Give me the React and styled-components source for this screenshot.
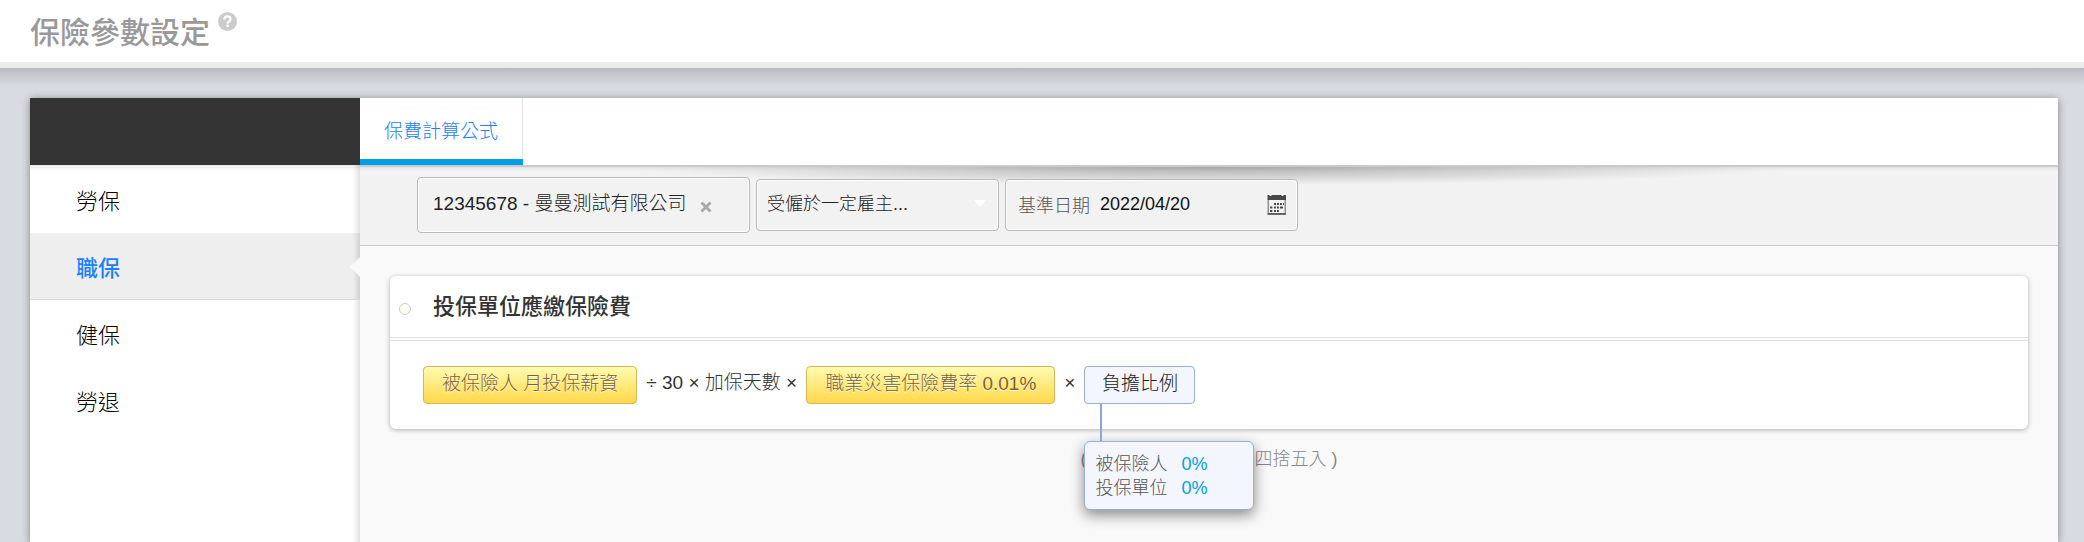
import React from "react";
import styled, { createGlobalStyle, css } from "styled-components";

const Global = createGlobalStyle`
  * { box-sizing: border-box; }
  html, body, #root { min-height: 100vh; }
  body {
    margin: 0;
    font-family: "Liberation Sans", "Noto Sans CJK TC", sans-serif;
    font-size: 19px;
    font-weight: 300;
    color: #333;
    background: #d8dbe1;
  }
  button, input, select { font: inherit; color: inherit; }
  #root { display: flex; flex-direction: column; }
`;

const Header = styled.header`
  display: flex;
  align-items: flex-start;
  height: 68px;
  padding: 12px 30px 0;
  background: #fff;
  border-bottom: 6px solid #ebebeb;
`;

const PageTitle = styled.h1`
  margin: 0;
  font-size: 30px;
  line-height: 42px;
  font-weight: 500;
  color: #999;
`;

const HelpButton = styled.button`
  display: flex;
  margin: 0 0 0 8px;
  padding: 0;
  border: 0;
  background: none;
`;

const Main = styled.main`
  flex: 1;
  display: flex;
  padding: 30px 26px 0 30px;
  background:
    linear-gradient(#b9bbc1, rgba(216, 219, 225, 0) 18px),
    #d8dbe1;
`;

const Panel = styled.div`
  flex: 1;
  display: flex;
  min-width: 0;
  background: #f9f9f9;
  box-shadow: 0 1px 8px rgba(0, 0, 0, 0.4);
`;

const Sidebar = styled.aside`
  flex: 0 0 330px;
  background: #fff;
`;

const SidebarHead = styled.div`
  height: 67px;
  background: #333;
`;

const NavList = styled.nav`
  display: flex;
  flex-direction: column;
  min-height: calc(100% - 67px);
  padding-top: 1px;
  background:
    linear-gradient(rgba(0, 0, 0, 0.09), rgba(0, 0, 0, 0) 6px),
    linear-gradient(to left, rgba(0, 0, 0, 0.12), rgba(0, 0, 0, 0) 7px);
`;

const NavItem = styled.a`
  position: relative;
  height: 67px;
  padding-left: 46px;
  font-size: 22px;
  line-height: 72px;
  color: #000;
  text-decoration: none;
  ${(p) => p.$active && css`
    color: #1a80ff;
    font-weight: 500;
    border-bottom: 1px solid #d8d8d8;
    background: linear-gradient(to left, rgba(0, 0, 0, 0.12), rgba(0, 0, 0, 0) 7px), #eee;
    &::after {
      content: "";
      position: absolute;
      right: 0;
      top: 24px;
      border: 10px solid transparent;
      border-left-width: 0;
      border-right-color: #f9f9f9;
    }
  `}
`;

const Content = styled.section`
  flex: 1;
  min-width: 0;
`;

const Tabs = styled.div`
  display: flex;
  height: 67px;
  background: #fff;
`;

const Tab = styled.button`
  padding: 2px 24px 0;
  border: 0;
  border-right: 1px solid #e4e4e4;
  border-bottom: 6px solid #009fe8;
  border-image: linear-gradient(#e4e4e4 61px, #009fe8 61px) 0 1 6 0;
  background: #fff;
  color: #1a80ff;
  font-weight: 300;
`;

const Filters = styled.form`
  display: flex;
  align-items: center;
  gap: 6px;
  height: 81px;
  padding: 0 57px 2px;
  border-top: 2px solid #c9caca;
  border-bottom: 1px solid #c9cbcb;
  background:
    radial-gradient(ellipse 34% 18px at 50% 0, rgba(0, 0, 0, 0.28), rgba(0, 0, 0, 0)),
    linear-gradient(rgba(0, 0, 0, 0.06), rgba(0, 0, 0, 0) 4px),
    #f2f2f2;
`;

const Field = styled.div`
  display: flex;
  align-items: center;
  width: ${(p) => p.$width}px;
  height: ${(p) => (p.$tall ? 56 : 52)}px;
  padding: 0 ${(p) => (p.$tall ? 15 : 10)}px 2px;
  border: 1px solid #b9b9b9;
  border-radius: 4px;
  background: #f2f2f2;
  box-shadow: inset 0 0 0 1px #fff;
  white-space: nowrap;
  color: #222;
`;

const Company = styled.span`
  padding-bottom: 6px;
`;

const ClearButton = styled.button`
  display: flex;
  margin: 6px 0 0 14px;
  padding: 0;
  border: 0;
  background: none;
`;

const Select = styled.select`
  flex: 1;
  min-width: 0;
  padding: 0;
  border: 0;
  appearance: none;
  background: none;
  font-size: 18px;
`;

const FieldLabel = styled.label`
  margin: 0 10px 0 2px;
  font-size: 18px;
  color: #555;
`;

const DateInput = styled.input`
  flex: 1;
  min-width: 0;
  padding: 0;
  border: 0;
  background: none;
  font-size: 18px;
  color: #111;
`;

const IconButton = styled.button`
  display: flex;
  padding: 0;
  border: 0;
  background: none;
`;

const Body = styled.div`
  padding: 30px;
`;

const Card = styled.article`
  border-radius: 6px;
  background: #fff;
  box-shadow: 0 1px 5px rgba(0, 0, 0, 0.3);
`;

const CardHead = styled.header`
  display: flex;
  align-items: center;
  height: 65px;
  padding: 0 9px;
  border-bottom: 4px double #e0e0e0;
`;

const Dot = styled.span`
  width: 12px;
  height: 12px;
  margin: 5px 22px 0 0;
  border: 1px solid #ccc;
  border-radius: 50%;
  background: #fffef5;
`;

const CardTitle = styled.h2`
  margin: 0;
  font-size: 22px;
  line-height: 32px;
  font-weight: 500;
`;

const Formula = styled.div`
  display: flex;
  align-items: center;
  height: 88px;
  padding: 0 33px;
  line-height: 28px;
`;

const Operator = styled.span`
  padding: 0 9px 4px;
  white-space: pre;
`;

const Chip = styled.button`
  height: 38px;
  padding: 0 18px 2px;
  border: 1px solid #d8b45c;
  border-radius: 4px;
  background: linear-gradient(#fffbb0, #ffd84a);
  color: #85601c;
  text-shadow: 0 1px 0 #fff;
  white-space: nowrap;
`;

const RatioWrap = styled.div`
  position: relative;
`;

const RatioButton = styled.button`
  display: block;
  width: 111px;
  height: 38px;
  padding: 0 0 2px;
  border: 1px solid #98afdc;
  border-radius: 4px;
  background: #f3f6fc;
  color: #222;
`;

const Popover = styled.dl`
  position: absolute;
  top: 75px;
  left: 0;
  z-index: 2;
  display: grid;
  grid-template-columns: 72px 1fr;
  column-gap: 14px;
  width: 170px;
  height: 69px;
  margin: 0;
  padding: 10px;
  border: 1px solid #98afdc;
  border-radius: 6px;
  background: #f3f6fc;
  box-shadow: 0 5px 14px rgba(0, 0, 0, 0.45);
  font-size: 18px;
  line-height: 24px;
  color: #555;
  &::before {
    content: "";
    position: absolute;
    left: 15px;
    top: -38px;
    width: 2px;
    height: 37px;
    background: #8fa6da;
  }
  dd { margin: 0; color: #00a0e9; }
`;

const Note = styled.p`
  display: flex;
  justify-content: center;
  gap: 168px;
  margin: 16px 0 0;
  font-size: 18px;
  line-height: 28px;
  color: #888;
`;

const navItems = ["勞保", "職保", "健保", "勞退"];

function HelpIcon() {
  return (
    <svg width="19" height="19" viewBox="0 0 19 19" aria-hidden="true">
      <circle cx="9.5" cy="9.5" r="9.5" fill="#ccc" />
      <path d="M6.4 7.4c0-2 1.3-3 3.1-3s3.100 1 3.100 2.700c0 2.200-2.900 2.200-2.900 4.300" fill="none" stroke="#fff" strokeWidth="2.2" />
      <rect x="8.5" y="12.6" width="2.4" height="2.3" fill="#fff" />
    </svg>
  );
}

function CalendarIcon() {
  return (
    <svg width="20" height="21" viewBox="0 0 20 21" aria-hidden="true">
      <path d="M0.500 1h2v1h2V1h10v1h2V1h2.500v5H0.500z" fill="#484848" />
      <path d="M1.200 6v13.800h17V6" fill="none" stroke="#777" strokeWidth="1.200" />
      <path d="M0.600 19.300h18.200v1.400H0.600z" fill="#484848" />
      <path d="M7 9h2v2H7zm3 0h2v2h-2zm3 0h2v2h-2zm3 0h1v2h-1zM3 12.500h2.400v2H3zm4 0h2v2H7zm3 0h2v2h-2zm3 0h3v2h-3zM3 16h2.400v2H3zm4 0h2v2H7zm3 0h2v2h-2z" fill="#484848" />
    </svg>
  );
}

export default function App() {
  return (
    <>
      <Global />
      <Header>
        <PageTitle>保險參數設定</PageTitle>
        <HelpButton aria-label="說明"><HelpIcon /></HelpButton>
      </Header>
      <Main>
        <Panel>
          <Sidebar>
            <SidebarHead />
            <NavList>
              {navItems.map((name) => (
                <NavItem key={name} href="#" $active={name === "職保"}>{name}</NavItem>
              ))}
            </NavList>
          </Sidebar>
          <Content>
            <Tabs><Tab type="button">保費計算公式</Tab></Tabs>
            <Filters>
              <Field $width={333} $tall>
                <Company>12345678 - 曼曼測試有限公司</Company>
                <ClearButton type="button" aria-label="清除">
                  <svg width="12" height="12" viewBox="0 0 12 12">
                    <path d="M1.5 1.5l9 9M10.5 1.5l-9 9" stroke="#aaa" strokeWidth="3" />
                  </svg>
                </ClearButton>
              </Field>
              <Field $width={243}>
                <Select aria-label="身分別" defaultValue="a">
                  <option value="a">受僱於一定雇主...</option>
                </Select>
                <svg width="14" height="8" viewBox="0 0 14 8"><path d="M0 0h12L6 7z" fill="#fff" /></svg>
              </Field>
              <Field $width={293}>
                <FieldLabel htmlFor="base-date">基準日期</FieldLabel>
                <DateInput id="base-date" defaultValue="2022/04/20" />
                <IconButton type="button" aria-label="選擇日期"><CalendarIcon /></IconButton>
              </Field>
            </Filters>
            <Body>
              <Card>
                <CardHead><Dot /><CardTitle>投保單位應繳保險費</CardTitle></CardHead>
                <Formula>
                  <Chip type="button">被保險人 月投保薪資</Chip>
                  <Operator>÷ 30 × 加保天數 ×</Operator>
                  <Chip type="button">職業災害保險費率 0.01%</Chip>
                  <Operator>×</Operator>
                  <RatioWrap>
                    <RatioButton type="button">負擔比例</RatioButton>
                    <Popover>
                      <dt>被保險人</dt><dd>0%</dd>
                      <dt>投保單位</dt><dd>0%</dd>
                    </Popover>
                  </RatioWrap>
                </Formula>
              </Card>
              <Note><span>(</span><span>四捨五入 )</span></Note>
            </Body>
          </Content>
        </Panel>
      </Main>
    </>
  );
}
